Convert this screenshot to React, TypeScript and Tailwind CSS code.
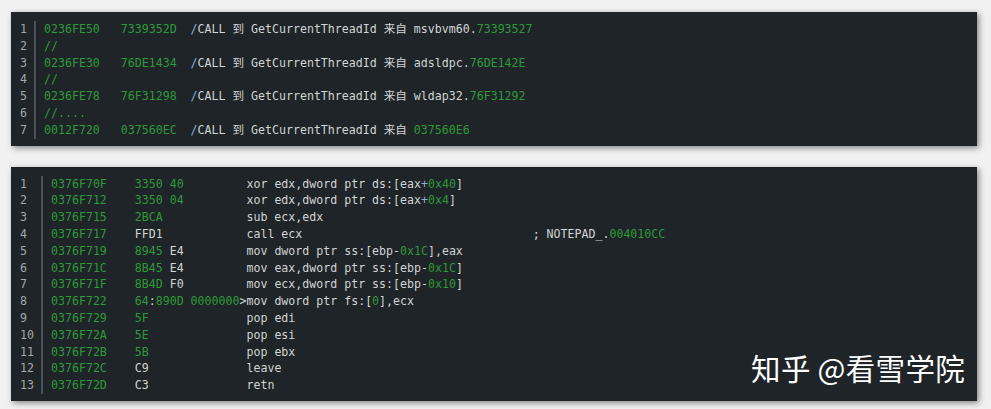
import React from "react";

type Seg = [string, ("g" | "w" | "b")?];

const G = "text-[#2f9a3a]";
const W = "text-[#d2d4d5]";
const B = "text-[#86aedc]";

const pad = (s: string, n: number) => s.padEnd(n, " ");

const top: Seg[][] = [
  [["0236FE50", "g"], ["   "], ["7339352D", "g"], ["  "], ["/", "b"], ["CALL 到 GetCurrentThreadId 来自 msvbvm60."], ["73393527", "g"]],
  [["//", "g"]],
  [["0236FE30", "g"], ["   "], ["76DE1434", "g"], ["  "], ["/", "b"], ["CALL 到 GetCurrentThreadId 来自 adsldpc."], ["76DE142E", "g"]],
  [["//", "g"]],
  [["0236FE78", "g"], ["   "], ["76F31298", "g"], ["  "], ["/", "b"], ["CALL 到 GetCurrentThreadId 来自 wldap32."], ["76F31292", "g"]],
  [["//....", "g"]],
  [["0012F720", "g"], ["   "], ["037560EC", "g"], ["  "], ["/", "b"], ["CALL 到 GetCurrentThreadId 来自 "], ["037560E6", "g"]],
];

const asm = (addr: string, bytes: Seg[], ins: Seg[]): Seg[] => {
  const bl = bytes.reduce((n, s) => n + s[0].length, 0);
  return [[pad(addr, 12), "g"], ...bytes, [" ".repeat(Math.max(0, 16 - bl))], ...ins];
};

const bottom: Seg[][] = [
  asm("0376F70F", [["3350 40", "g"]], [["xor edx,dword ptr ds:[eax"], ["+", "b"], ["0x40", "g"], ["]"]]),
  asm("0376F712", [["3350 04", "g"]], [["xor edx,dword ptr ds:[eax"], ["+", "b"], ["0x4", "g"], ["]"]]),
  asm("0376F715", [["2BCA", "g"]], [["sub ecx,edx"]]),
  asm("0376F717", [["FFD1"]], [[pad("call ecx", 41)], ["; NOTEPAD_."], ["004010CC", "g"]]),
  asm("0376F719", [["8945", "g"], [" E4"]], [["mov dword ptr ss:[ebp-"], ["0x1C", "g"], ["],eax"]]),
  asm("0376F71C", [["8B45", "g"], [" E4"]], [["mov eax,dword ptr ss:[ebp-"], ["0x1C", "g"], ["]"]]),
  asm("0376F71F", [["8B4D", "g"], [" F0"]], [["mov ecx,dword ptr ss:[ebp-"], ["0x10", "g"], ["]"]]),
  asm("0376F722", [["64", "g"], [":"], ["890D 0000000", "g"], [">"]], [["mov dword ptr fs:["], ["0", "g"], ["],ecx"]]),
  asm("0376F729", [["5F", "g"]], [["pop edi"]]),
  asm("0376F72A", [["5E", "g"]], [["pop esi"]]),
  asm("0376F72B", [["5B", "g"]], [["pop ebx"]]),
  asm("0376F72C", [["C9"]], [["leave"]]),
  asm("0376F72D", [["C3"]], [["retn"]]),
];

function CodeBlock({ rows, numWidth }: { rows: Seg[][]; numWidth: string }) {
  return (
    <div className="relative bg-[#1e2427] pt-[9px] pb-[7px] pl-[9px] shadow-[2px_2px_6px_rgba(0,0,0,0.45)] font-['DejaVu_Sans_Mono','Noto_Sans_CJK_SC',monospace] text-[11.6px] leading-[16.8px]">
      <div className="flex">
        <div className={`${numWidth} pr-[7px] text-[#a3a7aa]`}>
          {rows.map((_, i) => (
            <div key={i}>{i + 1}</div>
          ))}
        </div>
        <div className="border-l-2 border-[#4c5358] pl-[8px] whitespace-pre">
          {rows.map((r, i) => (
            <div key={i}>
              {r.map(([t, c], j) => (
                <span key={j} className={c === "g" ? G : c === "b" ? B : W}>
                  {t}
                </span>
              ))}
            </div>
          ))}
        </div>
      </div>
    </div>
  );
}

export default function App() {
  return (
    <div className="w-[991px] h-[409px] bg-[#f1f1f1] px-[11px] pt-[12px] flex flex-col gap-[21px]">
      <div className="w-[966px]">
        <CodeBlock rows={top} numWidth="w-[14px]" />
      </div>
      <div className="w-[966px] relative">
        <CodeBlock rows={bottom} numWidth="w-[21px]" />
        <div className="absolute right-[12px] bottom-[18px] text-white text-[29.5px] leading-none font-['Noto_Sans_CJK_SC',sans-serif] tracking-[0.3px]">
          知乎 @看雪学院
        </div>
      </div>
    </div>
  );
}
